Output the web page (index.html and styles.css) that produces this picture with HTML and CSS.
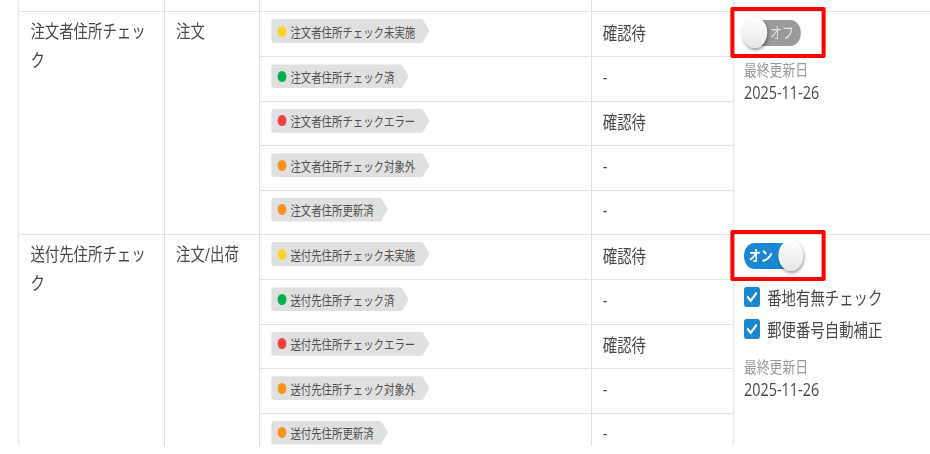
FILE: index.html
```html
<!DOCTYPE html>
<html lang="ja">
<head>
<meta charset="utf-8">
<title>住所チェック設定</title>
<link rel="stylesheet" href="styles.css">
</head>
<body>
<div class="viewport">
  <div class="page">
    <div class="row cut">
      <div class="cell"></div><div class="cell"></div><div class="cell"></div><div class="cell"></div><div class="cell"></div>
    </div>

    <div class="row group">
      <div class="cell name">注文者住所チェック</div>
      <div class="cell kind">注文</div>
      <div class="subs">
        <div class="sub">
          <div class="cell badge-cell"><span class="badge"><i class="dot yellow"></i>注文者住所チェック未実施</span></div>
          <div class="cell status">確認待</div>
        </div>
        <div class="sub">
          <div class="cell badge-cell"><span class="badge"><i class="dot green"></i>注文者住所チェック済</span></div>
          <div class="cell status">-</div>
        </div>
        <div class="sub">
          <div class="cell badge-cell"><span class="badge"><i class="dot red"></i>注文者住所チェックエラー</span></div>
          <div class="cell status">確認待</div>
        </div>
        <div class="sub">
          <div class="cell badge-cell"><span class="badge"><i class="dot orange"></i>注文者住所チェック対象外</span></div>
          <div class="cell status">-</div>
        </div>
        <div class="sub">
          <div class="cell badge-cell"><span class="badge"><i class="dot orange"></i>注文者住所更新済</span></div>
          <div class="cell status">-</div>
        </div>
      </div>
      <div class="cell setting">
        <div class="toggle-row">
          <div class="toggle off"><span class="knob"></span><span class="toggle-label">オフ</span></div>
          <span class="mark"></span>
        </div>
        <div class="updated-label">最終更新日</div>
        <div class="updated-date">2025-11-26</div>
      </div>
    </div>

    <div class="row group">
      <div class="cell name">送付先住所チェック</div>
      <div class="cell kind">注文/出荷</div>
      <div class="subs">
        <div class="sub">
          <div class="cell badge-cell"><span class="badge"><i class="dot yellow"></i>送付先住所チェック未実施</span></div>
          <div class="cell status">確認待</div>
        </div>
        <div class="sub">
          <div class="cell badge-cell"><span class="badge"><i class="dot green"></i>送付先住所チェック済</span></div>
          <div class="cell status">-</div>
        </div>
        <div class="sub">
          <div class="cell badge-cell"><span class="badge"><i class="dot red"></i>送付先住所チェックエラー</span></div>
          <div class="cell status">確認待</div>
        </div>
        <div class="sub">
          <div class="cell badge-cell"><span class="badge"><i class="dot orange"></i>送付先住所チェック対象外</span></div>
          <div class="cell status">-</div>
        </div>
        <div class="sub">
          <div class="cell badge-cell"><span class="badge"><i class="dot orange"></i>送付先住所更新済</span></div>
          <div class="cell status">-</div>
        </div>
      </div>
      <div class="cell setting">
        <div class="toggle-row">
          <div class="toggle on"><span class="toggle-label">オン</span><span class="knob"></span></div>
          <span class="mark"></span>
        </div>
        <div class="checks">
          <label class="check"><span class="box"><svg viewBox="0 0 20 20" width="20" height="20"><path d="M4.8 10.2l3.6 3.6 6.8-7.4" fill="none" stroke="#fff" stroke-width="2.6" stroke-linecap="round" stroke-linejoin="round"/></svg></span>番地有無チェック</label>
          <label class="check"><span class="box"><svg viewBox="0 0 20 20" width="20" height="20"><path d="M4.8 10.2l3.6 3.6 6.8-7.4" fill="none" stroke="#fff" stroke-width="2.6" stroke-linecap="round" stroke-linejoin="round"/></svg></span>郵便番号自動補正</label>
        </div>
        <div class="updated-label">最終更新日</div>
        <div class="updated-date">2025-11-26</div>
      </div>
    </div>
  </div>
</div>
</body>
</html>
```
FILE: styles.css
```css
html, body {
  margin: 0;
  padding: 0;
  overflow: hidden;
  background: #fff;
}
body {
  font-family: "Open Sans", "Noto Sans CJK JP", sans-serif;
  color: #4a4a4a;
}
.viewport {
  height: 446px;
  overflow: hidden;
}
.page {
  width: 1163px;
  padding-left: 23px;
  box-sizing: border-box;
  transform: scaleX(0.8);
  transform-origin: 0 0;
}
.row {
  display: grid;
  grid-template-columns: 182px 119px 415px 177px 1fr;
}
.cut {
  height: 11px;
}
.cell {
  border-left: 1px solid #d9d9d9;
  box-sizing: border-box;
  min-width: 0;
}
.group {
  border-top: 1px solid #e3e3e3;
  height: 223px;
  box-sizing: border-box;
}
.name, .kind {
  padding: 5px 14px 0;
  font-size: 18px;
  line-height: 28.8px;
}
.subs {
  grid-column: 3 / 5;
  display: flex;
  flex-direction: column;
}
.sub {
  display: grid;
  grid-template-columns: 415px 177px;
  height: 44.4px;
  box-sizing: border-box;
  flex: none;
}
.sub + .sub {
  border-top: 1px solid #e3e3e3;
}
.badge-cell {
  padding: 7px 0 0 13.5px;
}
.badge {
  display: inline-flex;
  align-items: center;
  height: 24px;
  padding: 0 18px 0 8.5px;
  background: #e0e0e0;
  color: #505050;
  font-size: 13px;
  white-space: nowrap;
  border-radius: 4px 0 0 4px;
  clip-path: polygon(0 0, calc(100% - 9px) 0, 100% 50%, calc(100% - 9px) 100%, 0 100%);
}
.dot {
  width: 11px;
  height: 11px;
  border-radius: 50%;
  margin-right: 5px;
  flex: none;
}
.yellow { background: #ffd42a; }
.green { background: #00b04f; }
.red { background: #f24141; }
.orange { background: #f7931e; }
.status {
  display: flex;
  align-items: center;
  padding: 0 0 4px 13.5px;
  font-size: 18px;
}
.setting {
  padding: 5px 0 0 13px;
}
.toggle-row {
  position: relative;
  height: 31px;
  display: flex;
  align-items: center;
}
.toggle {
  display: flex;
  align-items: center;
  width: 71px;
  height: 26px;
  border-radius: 13px;
  box-sizing: border-box;
}
.toggle.off {
  background: #9a9a9a;
  color: #e4e4e4;
}
.toggle.on {
  background: #1b87d3;
  color: #fff;
  justify-content: space-between;
  padding-left: 6px;
}
.knob {
  width: 31px;
  height: 31px;
  border-radius: 50%;
  background: linear-gradient(#ffffff, #e6e6e6);
  box-shadow: 1px 2px 4px rgba(0, 0, 0, 0.4);
  flex: none;
}
.off .knob { margin-left: -2.5px; }
.on .knob { margin-right: -2.5px; }
.toggle-label {
  font-size: 15px;
  line-height: 1;
}
.on .toggle-label { font-weight: 700; }
.off .toggle-label { margin-left: 4px; }
.mark {
  position: absolute;
  left: -17px;
  top: -10.5px;
  width: 119px;
  height: 51px;
  border: 4px solid #f00;
  border-left-width: 5px;
  border-right-width: 5px;
  border-radius: 2px;
  box-sizing: border-box;
}
.checks {
  margin-top: 10px;
}
.check {
  display: flex;
  align-items: center;
  gap: 9px;
  height: 32px;
  font-size: 18px;
}
.box {
  width: 20px;
  height: 20px;
  border-radius: 3px;
  background: #1a88d0;
  display: flex;
  flex: none;
}
.updated-label {
  margin-top: 12px;
  font-size: 16px;
  line-height: 20px;
  color: #9a9a9a;
}
.updated-date {
  font-size: 18px;
  line-height: 24px;
  color: #4a4a4a;
}
```
